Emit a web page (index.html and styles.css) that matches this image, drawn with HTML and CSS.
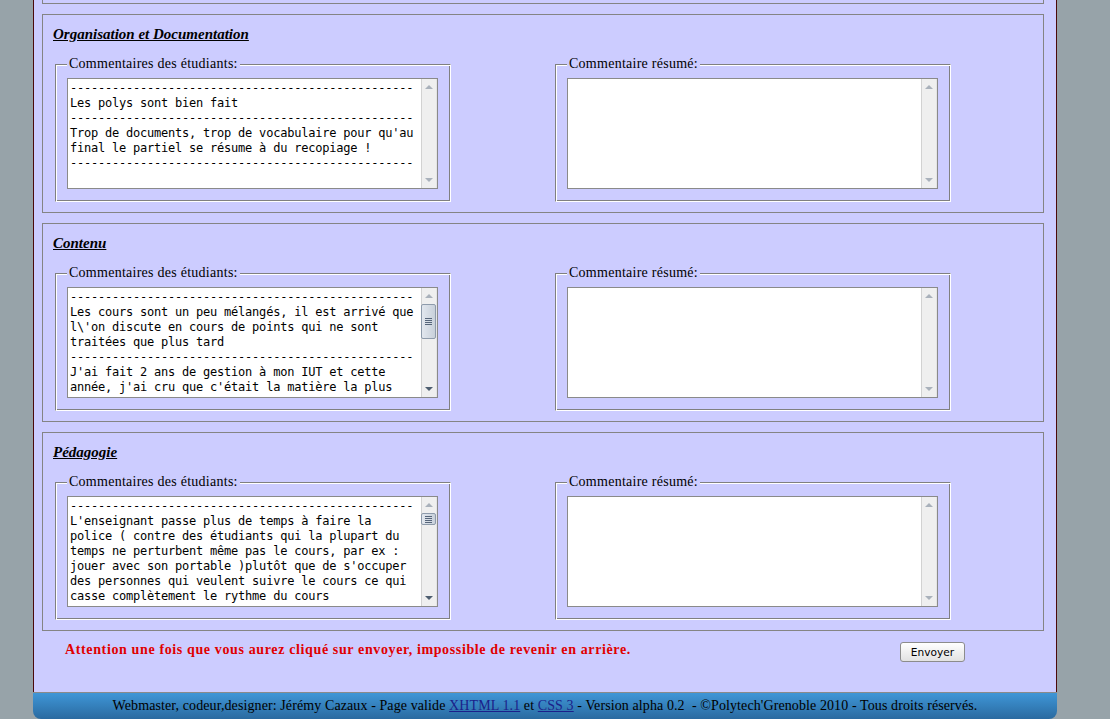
FILE: index.html
```html
<!DOCTYPE html>
<html lang="fr">
<head>
<meta charset="utf-8">
<title>Évaluation</title>
<link rel="stylesheet" href="styles.css">
</head>
<body>
<div class="page">
  <div class="section-tail"></div>

  <div class="section">
    <h2 class="section-title">Organisation et Documentation</h2>
    <div class="row">
      <fieldset class="box">
        <legend>Commentaires des étudiants:</legend>
        <div class="ta">
          <textarea class="ta-text" readonly>
-------------------------------------------------
Les polys sont bien fait
-------------------------------------------------
Trop de documents, trop de vocabulaire pour qu'au final le partiel se résume à du recopiage !
-------------------------------------------------</textarea>
          <div class="sb">
            <span class="sb-btn"><span class="arr up"></span></span>
            <span class="sb-track"></span>
            <span class="sb-btn"><span class="arr down"></span></span>
          </div>
        </div>
      </fieldset>
      <fieldset class="box">
        <legend>Commentaire résumé:</legend>
        <div class="ta">
          <textarea class="ta-text"></textarea>
          <div class="sb">
            <span class="sb-btn"><span class="arr up"></span></span>
            <span class="sb-track"></span>
            <span class="sb-btn"><span class="arr down"></span></span>
          </div>
        </div>
      </fieldset>
    </div>
  </div>

  <div class="section">
    <h2 class="section-title">Contenu</h2>
    <div class="row">
      <fieldset class="box">
        <legend>Commentaires des étudiants:</legend>
        <div class="ta">
          <textarea class="ta-text" readonly>
-------------------------------------------------
Les cours sont un peu mélangés, il est arrivé que l\'on discute en cours de points qui ne sont traitées que plus tard
-------------------------------------------------
J'ai fait 2 ans de gestion à mon IUT et cette année, j'ai cru que c'était la matière la plus</textarea>
          <div class="sb">
            <span class="sb-btn"><span class="arr up"></span></span>
            <span class="sb-track"><span class="thumb thumb-big"><span class="grip"></span></span></span>
            <span class="sb-btn"><span class="arr down active"></span></span>
          </div>
        </div>
      </fieldset>
      <fieldset class="box">
        <legend>Commentaire résumé:</legend>
        <div class="ta">
          <textarea class="ta-text"></textarea>
          <div class="sb">
            <span class="sb-btn"><span class="arr up"></span></span>
            <span class="sb-track"></span>
            <span class="sb-btn"><span class="arr down"></span></span>
          </div>
        </div>
      </fieldset>
    </div>
  </div>

  <div class="section">
    <h2 class="section-title">Pédagogie</h2>
    <div class="row">
      <fieldset class="box">
        <legend>Commentaires des étudiants:</legend>
        <div class="ta">
          <textarea class="ta-text" readonly>
-------------------------------------------------
L'enseignant passe plus de temps à faire la police ( contre des étudiants qui la plupart du temps ne perturbent même pas le cours, par ex : jouer avec son portable )plutôt que de s'occuper des personnes qui veulent suivre le cours ce qui casse complètement le rythme du cours
-------------------------------------------------</textarea>
          <div class="sb">
            <span class="sb-btn"><span class="arr up"></span></span>
            <span class="sb-track"><span class="thumb thumb-small"><span class="grip"></span></span></span>
            <span class="sb-btn"><span class="arr down active"></span></span>
          </div>
        </div>
      </fieldset>
      <fieldset class="box">
        <legend>Commentaire résumé:</legend>
        <div class="ta">
          <textarea class="ta-text"></textarea>
          <div class="sb">
            <span class="sb-btn"><span class="arr up"></span></span>
            <span class="sb-track"></span>
            <span class="sb-btn"><span class="arr down"></span></span>
          </div>
        </div>
      </fieldset>
    </div>
  </div>

  <div class="actions">
    <p class="warning">Attention une fois que vous aurez cliqué sur envoyer, impossible de revenir en arrière.</p>
    <button class="send" type="button">Envoyer</button>
  </div>
</div>

<div class="footer">Webmaster, codeur,designer: Jérémy Cazaux - Page valide <a href="#">XHTML 1.1</a> et <a href="#">CSS 3</a> - Version alpha 0.2&nbsp; - ©Polytech'Grenoble 2010 - Tous droits réservés.</div>
</body>
</html>
```
FILE: styles.css
```css
* {
  box-sizing: border-box;
}

html, body {
  margin: 0;
  padding: 0;
}

body {
  background: #97a3a9;
  font-family: "Liberation Serif", "Times New Roman", serif;
  color: #000;
  overflow: hidden;
}

.page {
  width: 1024px;
  margin-left: 33px;
  border-left: 1px solid #4b0a0a;
  border-right: 1px solid #4b0a0a;
  background: #ccccff;
}

.section-tail {
  width: 1002px;
  height: 4px;
  margin-left: 8px;
  border: 1px solid #848484;
  border-top: 0;
}

.section {
  width: 1002px;
  margin: 10px 0 0 8px;
  border: 1px solid #848484;
  padding: 11px 0 10px 0;
}

.section-title {
  margin: 0 0 0 10px;
  font-size: 15px;
  line-height: 17px;
  font-weight: bold;
  font-style: italic;
  text-decoration: underline;
}

.row {
  display: flex;
  gap: 104px;
  margin: 13px 0 0 12px;
}

.box {
  width: 396px;
  min-width: 0;
  margin: 0;
  padding: 6px 12px 12px 11px;
  border: 1px solid;
  border-color: #808080 #ffffff #ffffff #808080;
  box-shadow: inset 1px 1px 0 #ffffff, inset -1px -1px 0 #808080;
}

.box legend {
  margin-left: 0;
  padding: 0 2px;
  background: #ccccff;
  font-size: 14px;
  letter-spacing: 0.26px;
  line-height: 16px;
}

.ta {
  display: flex;
  width: 371px;
  height: 111px;
  border: 1px solid #8a8a8a;
  background: #ffffff;
}

.ta-text {
  flex: 1;
  min-width: 0;
  margin: 0;
  border: 0;
  padding: 2px;
  resize: none;
  overflow: hidden;
  outline: none;
  background: #ffffff;
  color: #000;
  font-family: "DejaVu Sans Mono", monospace;
  font-size: 12px;
  letter-spacing: -0.22px;
  line-height: 15px;
}

.sb {
  width: 16px;
  display: flex;
  flex-direction: column;
  background: #efefef;
  border-left: 1px solid #d2d2d2;
  border-right: 1px solid #e4e4e4;
}

.sb-btn {
  height: 16px;
  display: flex;
  align-items: center;
  justify-content: center;
}

.sb-track {
  flex: 1;
  display: flex;
  flex-direction: column;
}

.arr {
  width: 0;
  height: 0;
  border-left: 4px solid transparent;
  border-right: 4px solid transparent;
}

.arr.up {
  border-bottom: 4px solid #a9b1bb;
}

.arr.down {
  border-top: 4px solid #a9b1bb;
}

.arr.down.active {
  border-top-color: #4e5e70;
}

.thumb {
  display: flex;
  align-items: center;
  justify-content: center;
  margin: 0 0 0 -1px;
  width: 15px;
  border: 1px solid #8e9bab;
  border-radius: 2px;
  background: linear-gradient(to right, #e2e7ee, #c8d0da);
}

.thumb-big {
  height: 35px;
}

.thumb-small {
  height: 12px;
}

.grip {
  width: 7px;
  height: 7px;
  background: repeating-linear-gradient(to bottom, #56657a 0 1px, transparent 1px 2px);
}

.actions {
  display: flex;
  align-items: flex-start;
  justify-content: space-between;
  padding: 10px 91px 30px 31px;
}

.warning {
  margin: 1px 0 0 0;
  color: #e00000;
  font-size: 14px;
  font-weight: bold;
  letter-spacing: 0.63px;
  line-height: 16px;
}

.send {
  width: 65px;
  height: 20px;
  margin-top: 1px;
  padding: 0;
  border: 1px solid #8c8c8c;
  border-radius: 3px;
  background: linear-gradient(#ffffff, #e2e2e2);
  color: #000;
  font-family: "DejaVu Sans", sans-serif;
  font-size: 10.6px;
}

.footer {
  width: 1024px;
  height: 27px;
  margin-left: 33px;
  padding-top: 2px;
  border-top: 1px solid #8a8a8a;
  border-radius: 0 0 8px 8px;
  background: linear-gradient(#3f96d7, #2a6aa0);
  text-align: center;
  font-size: 14px;
  letter-spacing: 0.1px;
  line-height: 22px;
  color: #000;
}

.footer a {
  color: #1c1f8a;
}
```
